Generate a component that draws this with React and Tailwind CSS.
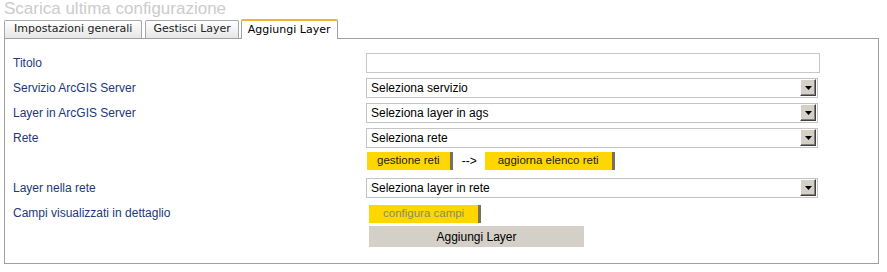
const font = { fontFamily: '"Liberation Sans", Arial, sans-serif' };
const tabFont = { fontFamily: '"DejaVu Sans", Verdana, sans-serif' };

function Select({ value }) {
  return (
    <div className="flex h-[20px] w-[452px] items-center justify-between border border-[#c4c4c4] bg-white pl-[4px] pr-[1px] text-[12px] text-black">
      <span>{value}</span>
      <span className="flex h-[17px] w-[16px] items-center justify-center border border-t-white border-l-white border-r-[#404040] border-b-[#404040] bg-[#d4d0c8] shadow-[inset_-1px_-1px_0_#808080]">
        <svg width="7" height="4" viewBox="0 0 7 4">
          <path d="M0 0h7L3.5 4z" fill="#000" />
        </svg>
      </span>
    </div>
  );
}

function Row({ label, children, className }) {
  return (
    <div className={"flex items-center " + (className || "h-[25px]")}>
      <div className="w-[361px] pl-[8px] text-[12px] text-[#22387a]">{label}</div>
      {children}
    </div>
  );
}

function YellowBtn({ children, muted, className }) {
  return (
    <span
      className={
        "flex h-[18px] items-center border-r-[3px] border-r-[#7a7060] bg-[#ffd700] text-[11.5px] " +
        (muted ? "text-[#8a8a6a] " : "text-[#222] ") +
        (className || "px-[11px]")
      }
    >
      {children}
    </span>
  );
}

export default function App() {
  return (
    <div className="h-[272px] w-[887px] overflow-hidden bg-white" style={font}>
      <div className="-mt-[1px] pl-[4px] text-[17px] leading-[20px] text-[#cccccc]">
        Scarica ultima configurazione
      </div>
      <div className="ml-[4px] flex items-end" style={tabFont}>
        <div className="flex h-[18px] items-center rounded-t-[2px] border border-b-0 border-[#a8a8a8] bg-gradient-to-b from-white to-[#e6e6e6] px-[9px] text-[11px] text-[#222]">
          Impostazioni generali
        </div>
        <div className="ml-[3px] flex h-[18px] items-center rounded-t-[2px] border border-b-0 border-[#a8a8a8] bg-gradient-to-b from-white to-[#e6e6e6] px-[7px] text-[11px] text-[#222]">
          Gestisci Layer
        </div>
        <div className="relative z-10 -mb-px ml-[2px] flex h-[20px] items-center rounded-t-[2px] border border-b-0 border-[#a0a0a0] border-t-2 border-t-[#f2b23a] bg-white px-[6px] text-[11px] text-black">
          Aggiungi Layer
        </div>
      </div>
      <div className="ml-[4px] h-[226px] w-[875px] border border-[#a0a0a0] pt-[11px]">
        <Row label="Titolo">
          <div className="h-[20px] w-[454px] border border-[#c8c8c8] bg-white" />
        </Row>
        <Row label="Servizio ArcGIS Server">
          <Select value="Seleziona servizio" />
        </Row>
        <Row label="Layer in ArcGIS Server">
          <Select value="Seleziona layer in ags" />
        </Row>
        <Row label="Rete">
          <Select value="Seleziona rete" />
        </Row>
        <Row label="" className="h-[21px]">
          <div className="flex items-center pl-[1px] text-[12px] text-black">
            <YellowBtn className="px-[10px]">gestione reti</YellowBtn>
            <span className="pl-[9px] pr-[8px]">--&gt;</span>
            <YellowBtn className="px-[13px]">aggiorna elenco reti</YellowBtn>
          </div>
        </Row>
        <Row label="Layer nella rete" className="mt-[4px] h-[25px]">
          <Select value="Seleziona layer in rete" />
        </Row>
        <Row label="Campi visualizzati in dettaglio" className="h-[22px] items-start pt-[4px]">
          <div className="pl-[3px] pt-[1px]">
            <YellowBtn muted className="px-[14px]">configura campi</YellowBtn>
          </div>
        </Row>
        <div className="ml-[364px] mt-[4px] flex h-[21px] w-[215px] items-center justify-center bg-[#d4d0c8] text-[12px] text-black">
          Aggiungi Layer
        </div>
      </div>
    </div>
  );
}
